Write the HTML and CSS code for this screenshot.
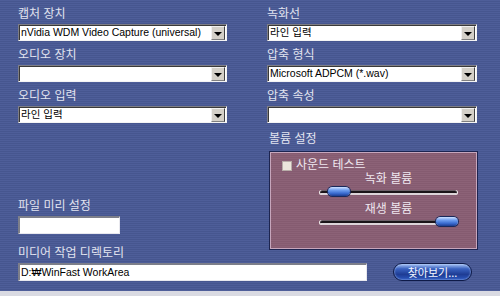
FILE: index.html
```html
<!DOCTYPE html>
<html>
  <head>
    <title>녹화 설정</title>
    <meta name="viewport" content="width=device-width, initial-scale=1" />
    <link rel="stylesheet" href="styles.css">
  </head>

  <body>
    <div class="screen">
      <div class="columns">
        <div class="field">
          <div class="label">캡처 장치</div>
          <div class="select"><span class="value">nVidia WDM Video Capture (universal)</span><span class="arrow"></span></div>
        </div>
        <div class="field">
          <div class="label">녹화선</div>
          <div class="select"><span class="value">라인 입력</span><span class="arrow"></span></div>
        </div>
        <div class="field">
          <div class="label">오디오 장치</div>
          <div class="select"><span class="value"></span><span class="arrow"></span></div>
        </div>
        <div class="field">
          <div class="label">압축 형식</div>
          <div class="select"><span class="value">Microsoft ADPCM (*.wav)</span><span class="arrow"></span></div>
        </div>
        <div class="field">
          <div class="label">오디오 입력</div>
          <div class="select"><span class="value">라인 입력</span><span class="arrow"></span></div>
        </div>
        <div class="field">
          <div class="label">압축 속성</div>
          <div class="select"><span class="value"></span><span class="arrow"></span></div>
        </div>

        <div class="left-bottom">
          <div class="label">파일 미리 설정</div>
          <div class="textbox short"></div>
          <div class="label media-label">미디어 작업 디렉토리</div>
        </div>

        <div class="volume">
          <div class="label">볼륨 설정</div>
          <div class="panel">
            <div class="check-row">
              <span class="checkbox"></span>
              <span>사운드 테스트</span>
            </div>
            <div class="slider-group">
              <div class="slider-label">녹화 볼륨</div>
              <div class="track"><span class="thumb thumb-low"></span></div>
              <div class="slider-label">재생 볼륨</div>
              <div class="track"><span class="thumb thumb-high"></span></div>
            </div>
          </div>
        </div>
      </div>

      <div class="dir-row">
        <div class="textbox long">D:₩WinFast WorkArea</div>
        <button class="browse">찾아보기...</button>
      </div>
    </div>
  </body>
</html>
```

FILE: styles.css
```css
*,
*:before,
*:after {
  box-sizing: border-box;
}

html {
  background: #d9dae2;
}

body {
  margin: 0;
  font-family: "Liberation Sans", "Noto Sans CJK KR", sans-serif;
  color: #e4e6f2;
}

.screen {
  width: 500px;
  height: 291px;
  padding: 7px 0 0 18px;
  background: repeating-linear-gradient(
    to bottom,
    #4e5e99 0px,
    #4e5e99 1px,
    #46568f 1px,
    #46568f 2px
  );
}

.columns {
  display: grid;
  grid-template-columns: 209px 210px;
  column-gap: 40px;
  row-gap: 7px;
}

.label {
  font-size: 12px;
  line-height: 15px;
  height: 15px;
  margin-bottom: 2px;
  color: #e2e4f0;
  white-space: nowrap;
}

.select {
  display: flex;
  align-items: stretch;
  height: 17px;
  background: #fff;
  border-top: 1px solid #7e7e86;
  border-left: 1px solid #7e7e86;
  border-right: 1px solid #f4f4f4;
  border-bottom: 1px solid #f4f4f4;
  box-shadow: inset 1px 1px 0 #3a3a3a;
}

.select .value {
  flex: 1;
  padding-left: 2px;
  font-size: 10.5px;
  line-height: 15px;
  color: #000;
  white-space: nowrap;
  overflow: hidden;
}

.select .arrow {
  width: 14px;
  margin: 1px 1px 0 0;
  background: #d4d0c8;
  border-top: 1px solid #f0f0f0;
  border-left: 1px solid #f0f0f0;
  border-right: 1px solid #404040;
  border-bottom: 1px solid #808080;
  display: flex;
  align-items: center;
  justify-content: center;
}

.select .arrow:before {
  content: "";
  border-left: 4px solid transparent;
  border-right: 4px solid transparent;
  border-top: 4px solid #000;
  margin-top: 1px;
}

.left-bottom {
  display: flex;
  flex-direction: column;
  justify-content: flex-end;
  padding-bottom: 1px;
}

.media-label {
  margin-top: 12px;
  margin-bottom: 0;
}

.textbox {
  height: 18px;
  background: #fff;
  border-top: 2px solid #7d7f8a;
  border-left: 2px solid #7d7f8a;
  border-right: 1px solid #e8e8ee;
  border-bottom: 1px solid #e8e8ee;
  font-size: 10.5px;
  line-height: 15px;
  color: #000;
  padding-left: 1px;
}

.textbox.short {
  width: 102px;
}

.textbox.long {
  width: 349px;
}

.volume {
  margin-top: 2px;
  margin-left: 2px;
  padding-bottom: 12px;
}

.volume .label {
  margin-bottom: 4px;
}

.panel {
  width: 209px;
  height: 99px;
  border: 1px solid #1c2450;
  box-shadow: inset 0 0 0 1px #c6a6bc;
  background: repeating-linear-gradient(
    to bottom,
    #8c6277 0px,
    #8c6277 1px,
    #855b70 1px,
    #855b70 2px
  );
  padding: 6px 20px 0 12px;
}

.check-row {
  display: flex;
  align-items: center;
  gap: 4px;
  font-size: 12px;
  line-height: 15px;
  color: #f0e8f0;
}

.checkbox {
  width: 10px;
  height: 10px;
  background: #ece6dc;
  border: 1px solid #b8aca8;
}

.slider-group {
  margin-left: 38px;
  display: flex;
  flex-direction: column;
}

.slider-label {
  text-align: center;
  font-size: 12px;
  line-height: 15px;
  color: #f0e8f0;
  margin-top: -1px;
  margin-bottom: 3px;
}

.track {
  position: relative;
  height: 5px;
  margin-bottom: 8px;
  border-radius: 3px;
  background: #1a1418;
  border-top: 1px solid #6c6068;
  border-bottom: 2px solid #dcd4d8;
  box-shadow: -1px 0 0 #f4f0f0, 1px 0 0 #f4f0f0;
}

.thumb {
  position: absolute;
  top: -4px;
  width: 22px;
  height: 9px;
  border-radius: 5px;
  background: linear-gradient(to bottom, #cfe2ff 0%, #6e9ef0 35%, #3a6cd0 70%, #1c3c90 100%);
  box-shadow: 0 0 0 1px #1a2a5c;
}

.thumb-low {
  left: 8px;
}

.thumb-high {
  right: -1px;
}

.dir-row {
  display: flex;
  align-items: center;
  gap: 26px;
  margin-top: 1px;
}

.browse {
  width: 79px;
  height: 18px;
  padding: 0;
  border: 1px solid #0e1a48;
  border-radius: 9px;
  background: linear-gradient(to bottom, #a8c4f4 0%, #3a62c0 30%, #1e3c94 65%, #2c58c0 100%);
  box-shadow: inset 0 0 2px #c0d8ff;
  font-family: "Noto Sans CJK KR", sans-serif;
  font-size: 11px;
  line-height: 15px;
  color: #f4f6ff;
}
```
